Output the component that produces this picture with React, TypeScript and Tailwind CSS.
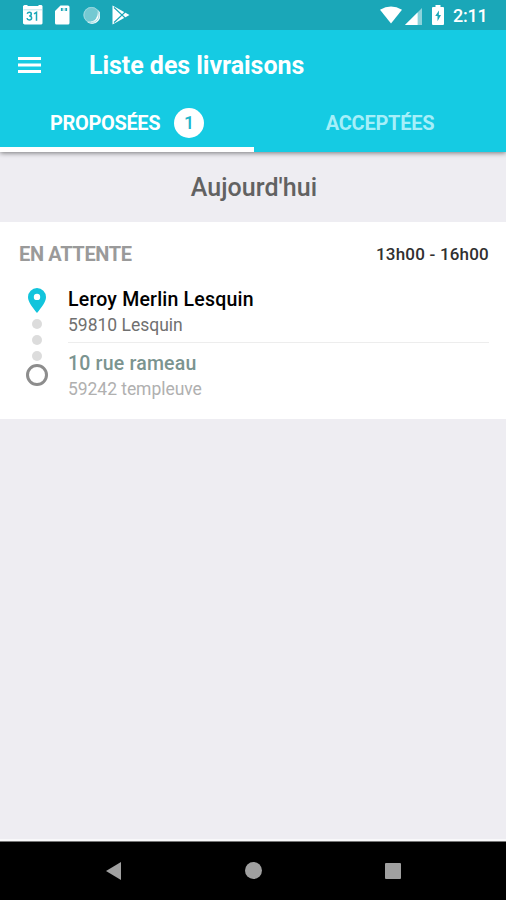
import React from "react";

function StatusBar() {
  return (
    <div className="relative z-20 flex h-[30px] shrink-0 items-center bg-[#1aa7b8] pl-[23px] pr-[20px] text-white">
      <svg width="20" height="20" viewBox="0 0 20 20" fill="currentColor">
        <path d="M1.5 0h3v1h11V0h3l1 1v17.5l-1 1h-17L0 18.5V1z" />
        <path d="M0.5 4.8h19" stroke="#a5dbe2" strokeWidth="0.7" />
        <g fill="none" stroke="#1aa7b8" strokeWidth="1.5">
          <path d="M4.2 8.7Q4.7 7.3 6.3 7.3Q8.3 7.3 8.3 9Q8.3 10.9 6.2 10.9Q8.6 10.9 8.6 13Q8.6 15 6.3 15Q4.3 15 4 13.2" />
          <path d="M11 8.8l2.5-1.4V15.7" />
        </g>
      </svg>
      <svg className="ml-[12px]" width="15" height="20" viewBox="0 0 15 20" fill="currentColor">
        <path d="M5.5 0.5H13a1.5 1.5 0 0 1 1.5 1.5v16a1.5 1.5 0 0 1-1.5 1.5H1.5A1.5 1.5 0 0 1 0 18V6z" />
        <path d="M6.8 3v3M11.2 3v3" stroke="#1aa7b8" strokeWidth="1.8" />
        <path d="M9 3v3" stroke="#8dd3db" strokeWidth="1" />
      </svg>
      <svg className="ml-[13px]" width="17" height="18" viewBox="0 0 18 18">
        <circle cx="9" cy="9" r="8.6" fill="#74c9d2" />
        <path d="M16.4 4.5A8.4 8.4 0 0 1 5 16.5Q11 17 14 13.2Q16.4 10 16.4 4.5z" fill="#ffffff" stroke="white" strokeWidth="0.8" />
        <circle cx="9" cy="9" r="8" fill="none" stroke="#9bd8df" strokeWidth="1" />
      </svg>
      <svg className="ml-[12px]" width="18" height="20" viewBox="0 0 18 20">
        <path d="M0.5 0.5L17.5 10L0.5 19.5z" fill="white" />
        <path d="M2 2.5L13.2 13M2 17.5L13.2 7" stroke="#1aa7b8" strokeWidth="1.1" />
      </svg>
      <svg className="ml-auto" width="22" height="18" viewBox="0 0 22 18" fill="currentColor">
        <path d="M0 3.8Q11-3 22 3.8L11 17.5z" />
      </svg>
      <svg className="mt-[2px] ml-[3px]" width="17" height="17" viewBox="0 0 17 17">
        <path d="M0 17L17 0V17z" fill="#8dd3db" />
        <path d="M0 17L12.6 4.4V17z" fill="white" />
      </svg>
      <svg className="ml-[10px]" width="12" height="20" viewBox="0 0 12 20">
        <path d="M3.5 0h5v2H11q1 0 1 1v16q0 1-1 1H1q-1 0-1-1V3q0-1 1-1h2.5z" fill="white" />
        <path d="M7 5.5L3.2 11H5.5V16.2L9 10H6.8z" fill="#1aa7b8" />
      </svg>
      <span className="ml-[9px] mt-[2px] w-[33px] whitespace-nowrap text-[18px] leading-5 font-medium tracking-[-0.2px]">2:11</span>
    </div>
  );
}

function Header() {
  return (
    <header className="relative z-10 flex h-[122px] shrink-0 flex-col bg-[#15cbe3] text-white shadow-[0_1px_5px_rgba(0,0,0,0.5)]">
      <div className="flex h-[70px] items-center pl-[18px]">
        <svg width="23" height="16" viewBox="0 0 23 16" fill="currentColor">
          <path d="M0 0h23v3H0zM0 6.5h23v3H0zM0 13h23v3H0z" />
        </svg>
        <h1 className="ml-[48px] mt-[2px] whitespace-nowrap text-[25px] leading-8 font-bold tracking-[-0.05px]">Liste des livraisons</h1>
      </div>
      <nav className="flex h-[52px] text-[20px] leading-6 font-bold">
        <div className="flex h-full w-[254px] items-center border-b-[5px] border-white pb-[2px] pl-[50px]">
          <span className="w-[111px] whitespace-nowrap tracking-[-0.35px]">PROPOSÉES</span>
          <span className="ml-[13px] flex size-[30px] items-center justify-center rounded-full bg-white text-[18px] font-medium text-[#1bb5ca]">1</span>
        </div>
        <div className="flex h-[47px] flex-1 items-center justify-center pb-[2px] tracking-[-0.25px] text-[#a5eff9]">ACCEPTÉES</div>
      </nav>
    </header>
  );
}

function Delivery() {
  return (
    <article className="h-[197px] bg-white pr-[17px] pl-[18px] pt-[20px]">
      <div className="flex h-6 items-center justify-between">
        <span className="pl-px text-[20px] leading-6 font-bold tracking-[-0.35px] text-[#9a9a9a]">EN ATTENTE</span>
        <span className="text-[17px] leading-6 font-medium tracking-[0.2px] text-[#303030]">13h00 - 16h00</span>
      </div>
      <div className="flex">
        <div className="flex w-[38px] flex-col items-center pt-[22px]">
          <svg width="18" height="25" viewBox="0 0 18 25">
            <path fillRule="evenodd" fill="#12c4dc" d="M9 0A9 9 0 0 0 0 9C0 14 4.5 19.3 9 25C13.5 19.3 18 14 18 9A9 9 0 0 0 9 0zM9 5.7a3.2 3.2 0 1 1 0 6.4a3.2 3.2 0 0 1 0-6.4z" />
          </svg>
          <div className="mt-[6px] flex flex-col gap-[6px]">
            <i className="size-[10px] rounded-full bg-[#dcdcdc]" />
            <i className="size-[10px] rounded-full bg-[#dcdcdc]" />
            <i className="size-[10px] rounded-full bg-[#dcdcdc]" />
          </div>
          <div className="mt-[3px] size-[22px] rounded-full border-[3px] border-[#8d8d8d]" />
        </div>
        <div className="ml-[12px] flex-1 whitespace-nowrap pt-[20px]">
          <div className="h-[57px] border-b border-[#ededed]">
            <div className="text-[19.5px] leading-[27px] font-medium tracking-[0.2px] text-black">Leroy Merlin Lesquin</div>
            <div className="text-[17.5px] leading-6 text-[#707070]">59810 Lesquin</div>
          </div>
          <div className="pt-[7px]">
            <div className="text-[19.5px] leading-[27px] font-medium tracking-[0.2px] text-[#7b9490]">10 rue rameau</div>
            <div className="text-[17.5px] leading-6 tracking-[-0.05px] text-[#b0b0b0]">59242 templeuve</div>
          </div>
        </div>
      </div>
    </article>
  );
}

export default function App() {
  return (
    <div className="flex h-[900px] w-[506px] flex-col overflow-hidden bg-[#eeedf2] font-['Roboto',sans-serif]">
      <StatusBar />
      <Header />
      <main className="flex-1">
        <h2 className="flex h-[70px] items-center justify-center pt-[2px] pl-[2px] text-[25px] leading-8 font-medium tracking-[0.05px] text-[#626262]">Aujourd'hui</h2>
        <Delivery />
      </main>
      <footer className="flex h-[59px] shrink-0 items-center border-t border-[#777] bg-black pl-[106px] pb-px shadow-[0_-2px_0_#f8f8fa]">
        <svg width="15" height="18" viewBox="0 0 15 18"><path d="M0 9L15 0V18z" fill="#a0a0a0" /></svg>
        <i className="ml-[124px] size-[17px] rounded-full bg-[#a0a0a0]" />
        <i className="ml-[123px] size-[16px] rounded-[1px] bg-[#a0a0a0]" />
      </footer>
    </div>
  );
}
